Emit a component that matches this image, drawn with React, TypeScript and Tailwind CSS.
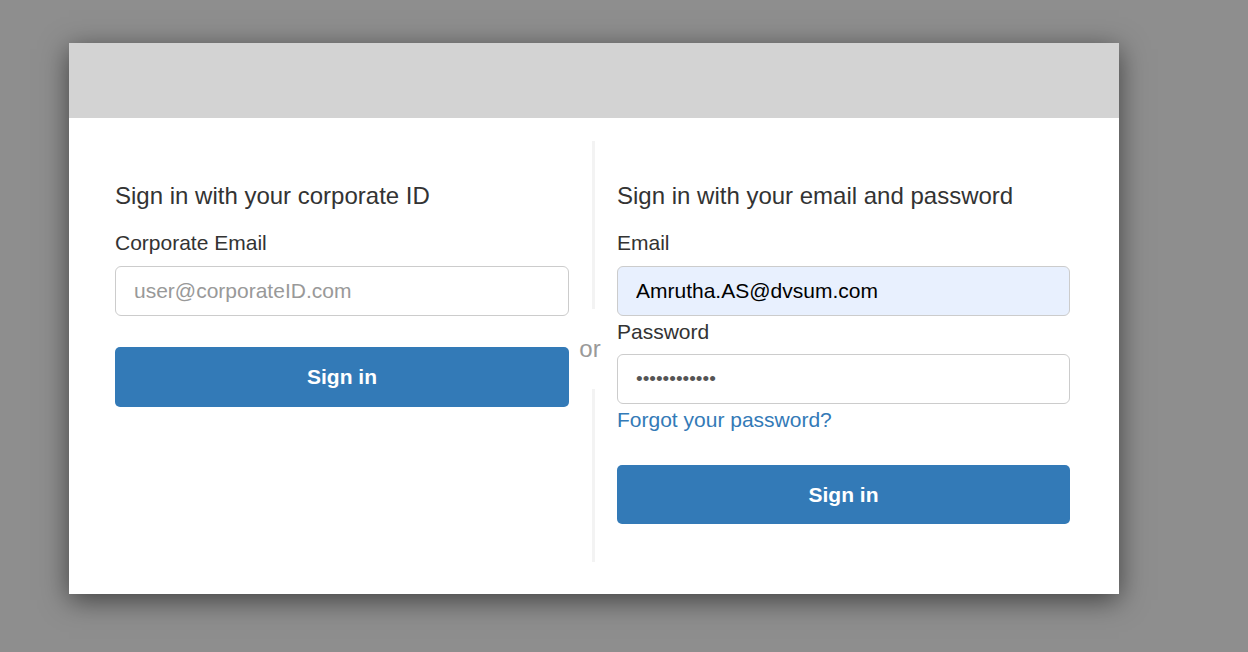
export default function App() {
  return (
    <div className="min-h-screen bg-[#8e8e8e] pt-[43px] pl-[69px] font-['Liberation_Sans',Arial,sans-serif] text-[#333]">
      <div className="w-[1050px] bg-white shadow-[0_6px_26px_rgba(0,0,0,0.55)]">
        <div className="h-[75px] bg-[#d3d3d3]" />
        <div className="flex h-[476px] pl-[46px] pr-[49px] pt-[23px]">
          {/* corporate sign in */}
          <div className="w-[454px] pt-[42px]">
            <h2 className="text-[24px] leading-[26px]">Sign in with your corporate ID</h2>
            <label className="mt-[22px] block text-[21px] leading-[24px]">Corporate Email</label>
            <input
              className="mt-[11px] block h-[50px] w-full rounded-[6px] border border-[#ccc] bg-white pl-[18px] text-[21px] outline-none placeholder:text-[#999]"
              placeholder="user@corporateID.com"
            />
            <button className="mt-[31px] block h-[60px] w-full rounded-[5px] bg-[#337ab7] text-[21px] font-bold text-white">
              Sign in
            </button>
          </div>

          {/* divider */}
          <div className="flex w-[48px] flex-col items-center pl-[1px]">
            <div className="h-[168px] w-[3px] bg-[#f3f3f3]" />
            <div className="flex h-[80px] items-center pr-[7px] text-[24px] text-[#999]">or</div>
            <div className="h-[173px] w-[3px] bg-[#f3f3f3]" />
          </div>

          {/* email + password */}
          <div className="w-[453px] pt-[42px]">
            <h2 className="text-[24px] leading-[26px]">Sign in with your email and password</h2>
            <label className="mt-[22px] block text-[21px] leading-[24px]">Email</label>
            <input
              className="mt-[11px] block h-[50px] w-full rounded-[6px] border border-[#ccc] bg-[#e8f0fe] pl-[18px] text-[21px] text-black outline-none"
              defaultValue="Amrutha.AS@dvsum.com"
              readOnly
            />
            <label className="mt-[4px] block text-[21px] leading-[24px]">Password</label>
            <div className="mt-[10px] flex h-[50px] w-full items-center rounded-[6px] border border-[#ccc] bg-white pl-[18px] text-[19px] text-[#555]">
              ••••••••••••
            </div>
            <a href="#" className="mt-[4px] block text-[21px] leading-[24px] text-[#337ab7]">
              Forgot your password?
            </a>
            <button className="mt-[33px] block h-[59px] w-full rounded-[5px] bg-[#337ab7] text-[21px] font-bold text-white">
              Sign in
            </button>
          </div>
        </div>
      </div>
    </div>
  );
}
